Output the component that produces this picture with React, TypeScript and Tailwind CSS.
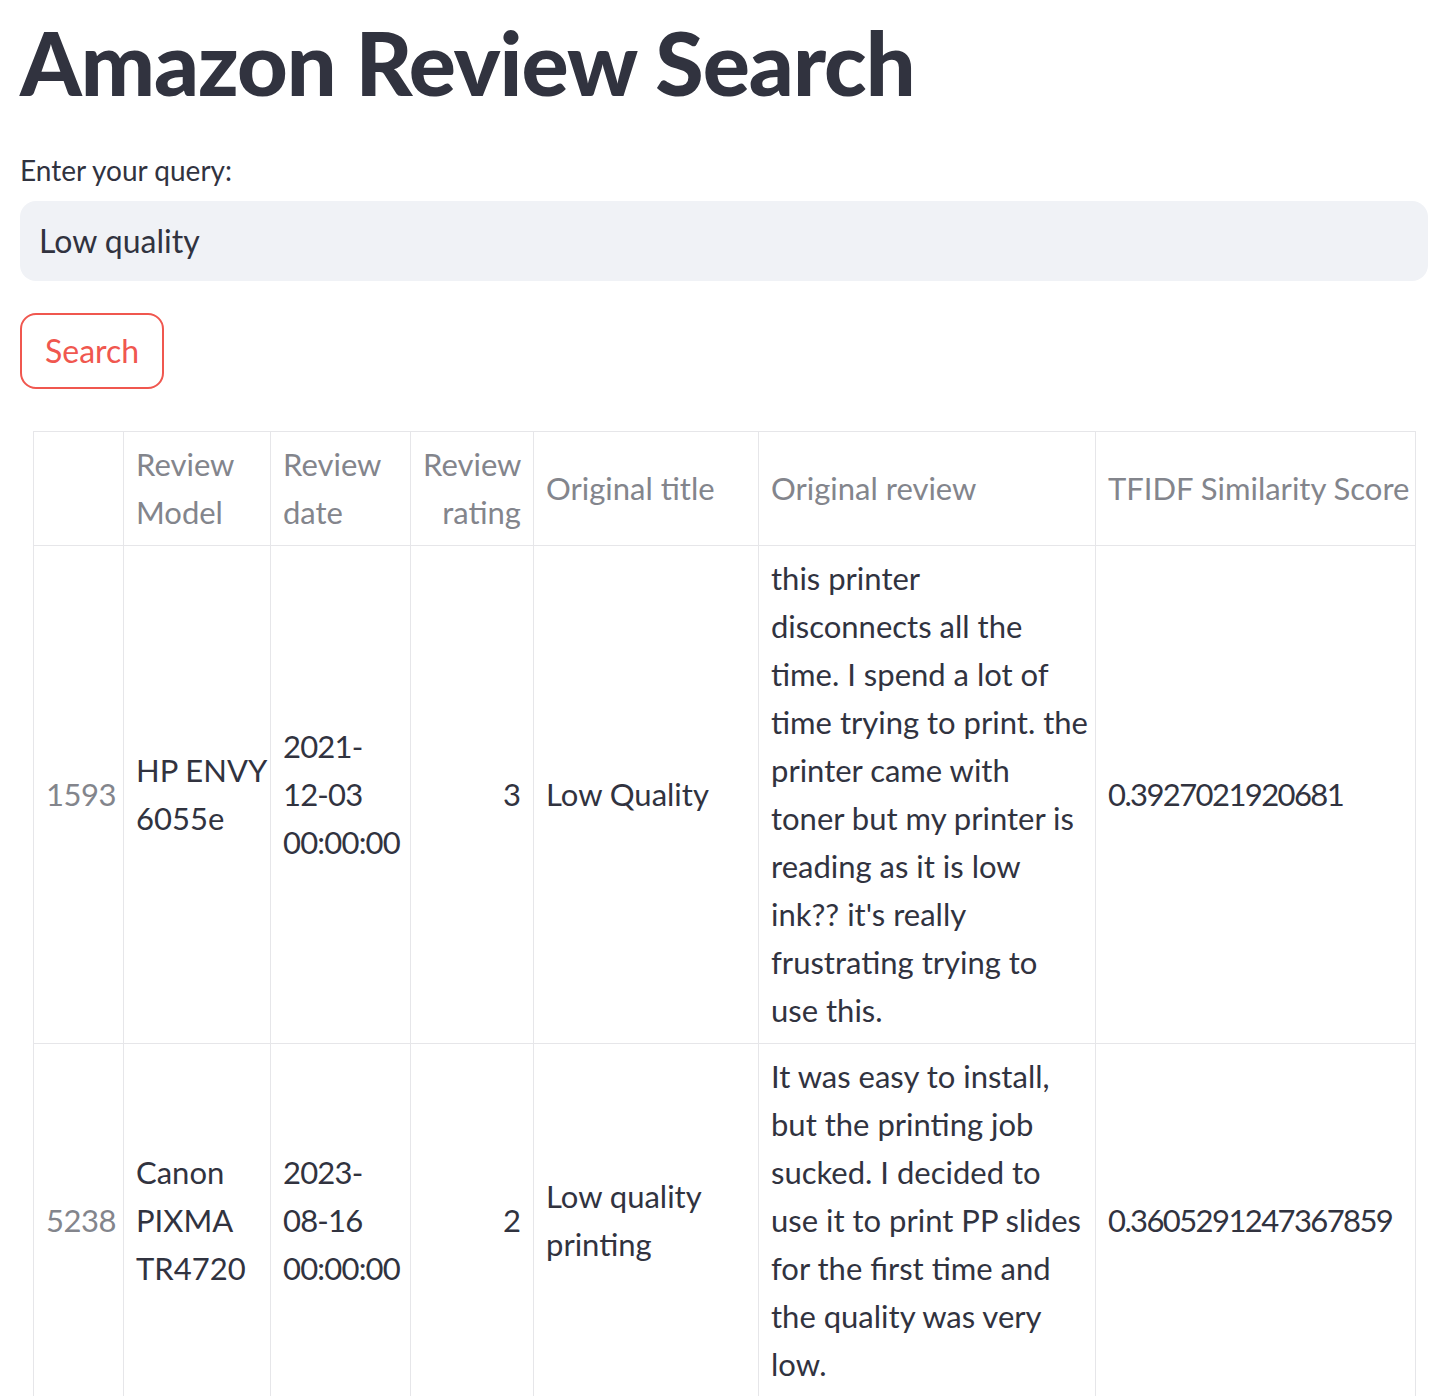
import React from "react";

const rows = [
  {
    idx: "1593",
    model: ["HP ENVY", "6055e"],
    date: ["2021-", "12-03", "00:00:00"],
    rating: "3",
    title: ["Low Quality"],
    review: [
      "this printer",
      "disconnects all the",
      "time. I spend a lot of",
      "time trying to print. the",
      "printer came with",
      "toner but my printer is",
      "reading as it is low",
      "ink?? it's really",
      "frustrating trying to",
      "use this.",
    ],
    score: "0.3927021920681",
  },
  {
    idx: "5238",
    model: ["Canon", "PIXMA", "TR4720"],
    date: ["2023-", "08-16", "00:00:00"],
    rating: "2",
    title: ["Low quality", "printing"],
    review: [
      "It was easy to install,",
      "but the printing job",
      "sucked. I decided to",
      "use it to print PP slides",
      "for the first time and",
      "the quality was very",
      "low.",
    ],
    score: "0.3605291247367859",
  },
];

function Lines({ lines }: { lines: string[] }) {
  return (
    <>
      {lines.map((l, i) => (
        <div key={i} className="whitespace-nowrap">
          {l}
        </div>
      ))}
    </>
  );
}

export default function App() {
  const th = "border border-[#e6e6e9] px-3 py-[8.5px] font-normal text-[#83858c] align-middle";
  const td = "border border-[#e6e6e9] px-3 py-[8.5px] align-middle";

  return (
    <div className="min-h-screen bg-white pl-5 pr-[22px] text-[#31333f] font-['Lato','Noto_Sans',sans-serif]">
      {/* Title */}
      <h1 className="pt-[10px] text-[88px] font-black leading-[1.2] tracking-[-1px]">
        Amazon Review Search
      </h1>

      {/* Query input */}
      <label className="mt-[35px] block text-[28px] leading-[1.4]">Enter your query:</label>
      <div className="mt-[11px] flex h-[80px] items-center rounded-2xl bg-[#f0f2f6] px-[19px] text-[32px]">
        Low quality
      </div>

      <button className="mt-8 h-[76px] rounded-2xl border-2 border-[#f0574f] px-[23px] text-[32px] text-[#f0574f]">
        Search
      </button>

      {/* Results */}
      <div className="mx-[13px] mt-[42px]">
        <table className="w-[1382px] table-fixed border-collapse text-[31px] leading-[48px]">
          <colgroup>
            <col className="w-[90px]" />
            <col className="w-[147px]" />
            <col className="w-[140px]" />
            <col className="w-[123px]" />
            <col className="w-[225px]" />
            <col className="w-[337px]" />
            <col className="w-[320px]" />
          </colgroup>
          <thead>
            <tr>
              <th className={th}></th>
              <th className={`${th} text-left`}>
                <Lines lines={["Review", "Model"]} />
              </th>
              <th className={`${th} text-left`}>
                <Lines lines={["Review", "date"]} />
              </th>
              <th className={`${th} text-right`}>
                <Lines lines={["Review", "rating"]} />
              </th>
              <th className={`${th} text-left`}>Original title</th>
              <th className={`${th} text-left`}>Original review</th>
              <th className={`${th} text-left whitespace-nowrap`}>TFIDF Similarity Score</th>
            </tr>
          </thead>
          <tbody>
            {rows.map((r) => (
              <tr key={r.idx}>
                <th className={`${th} text-left tracking-[-0.5px]`}>{r.idx}</th>
                <td className={td}>
                  <Lines lines={r.model} />
                </td>
                <td className={`${td} tracking-[-0.8px]`}>
                  <Lines lines={r.date} />
                </td>
                <td className={`${td} text-right`}>{r.rating}</td>
                <td className={td}>
                  <Lines lines={r.title} />
                </td>
                <td className={td}>
                  <Lines lines={r.review} />
                </td>
                <td className={`${td} whitespace-nowrap tracking-[-1.6px]`}>{r.score}</td>
              </tr>
            ))}
          </tbody>
        </table>
      </div>
    </div>
  );
}
